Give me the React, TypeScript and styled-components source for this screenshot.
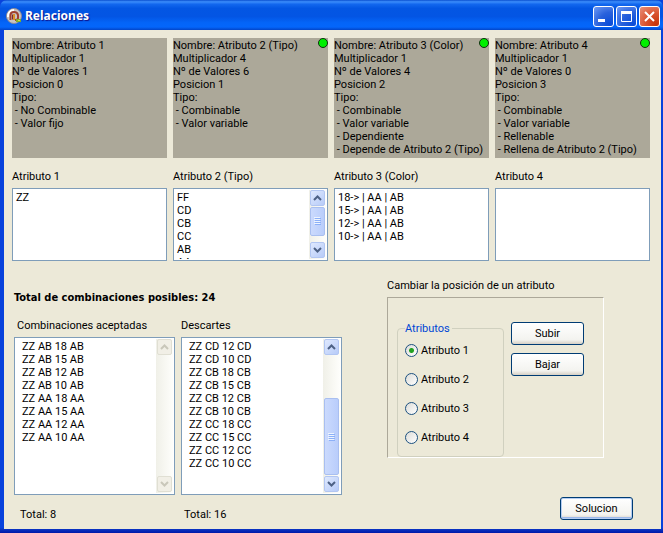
import React, { useState } from "react";
import styled, { createGlobalStyle, css } from "styled-components";

const GlobalStyle = createGlobalStyle`
  *, *::before, *::after { box-sizing: border-box; }
  body { margin: 0; background: #ece9d8; }
  body, button, input {
    font-family: Roboto, "DejaVu Sans Condensed", sans-serif;
    font-size: 11px;
    line-height: 13px;
    color: #000;
  }
`;

const Window = styled.main`
  display: flex;
  flex-direction: column;
  min-height: 100vh;
  background: linear-gradient(to top, #0018a8 0, #0a35c4 4px, #0842dc 5px);
`;

const TitleBar = styled.header`
  display: flex;
  align-items: center;
  gap: 3px;
  height: 30px;
  padding: 2px 3px 0 6px;
  border-radius: 7px 7px 0 0;
  background: linear-gradient(
    to bottom,
    #0a4fd0 0%,
    #3b8dfb 6%,
    #1267ee 14%,
    #0356e3 28%,
    #0355e4 55%,
    #0465f8 76%,
    #0466fb 90%,
    #0345c8 100%
  );
`;

const Title = styled.h1`
  flex: 1;
  margin: 0;
  font: bold 12px/18px "Noto Sans", "Open Sans", sans-serif;
  color: #fff;
  text-shadow: 1px 1px 1px #0f1089;
`;

const Captions = styled.div`
  display: flex;
  gap: 2px;
`;

const CaptionButton = styled.button<{ $close?: boolean }>`
  width: 21px;
  height: 21px;
  padding: 0;
  border: 1px solid #fff;
  border-radius: 3px;
  background: ${(p) =>
    p.$close
      ? "radial-gradient(circle at 85% 90%, #c5340a, #d9532f 45%, #e9907a)"
      : "radial-gradient(circle at 85% 90%, #0a4cd8, #2a62dc 50%, #6f9bf5)"};

  svg { display: block; }
`;

const Client = styled.div`
  flex: 1;
  display: flex;
  flex-direction: column;
  margin: 0 2px 4px 4px;
  padding: 8px 11px 8px 8px;
  background: #ece9d8;
`;

const AttributeGrid = styled.section`
  display: grid;
  grid-template-columns: repeat(4, minmax(0, 1fr));
  column-gap: 6px;
  row-gap: 12px;
`;

const InfoPanel = styled.article`
  position: relative;
  height: 120px;
  padding-top: 1px;
  background: #aca899;
  white-space: pre;
`;

const StatusDot = styled.span`
  position: absolute;
  top: 0;
  right: 0;
  width: 10px;
  height: 10px;
  border: 1px solid #103010;
  border-radius: 50%;
  background: #00f000;
`;

const Labelled = styled.div<{ $gap: number }>`
  display: flex;
  flex-direction: column;
  gap: ${(p) => p.$gap}px;
  min-width: 0;
`;

const Label = styled.span<{ $indent?: number }>`
  padding-left: ${(p) => p.$indent ?? 0}px;
  white-space: nowrap;
`;

const ListFrame = styled.div<{ $height: number }>`
  display: flex;
  height: ${(p) => p.$height}px;
  padding: 1px;
  border: 1px solid #7f9db9;
  background: #fff;
`;

const Items = styled.ul<{ $indent: number }>`
  flex: 1;
  min-width: 0;
  margin: 0;
  padding: 1px 0 0 ${(p) => p.$indent}px;
  overflow: hidden;
  list-style: none;
  white-space: nowrap;
`;

const Track = styled.div`
  display: flex;
  flex-direction: column;
  width: 17px;
  background: linear-gradient(to right, #f0f0e8, #fefefb);
`;

const arrowColors = css<{ $disabled?: boolean }>`
  border: 1px solid ${(p) => (p.$disabled ? "#e0dfd3" : "#b2c6f2")};
  background: ${(p) =>
    p.$disabled ? "#f1efe6" : "linear-gradient(135deg, #dfe9fe, #b7cbf8)"};
  color: ${(p) => (p.$disabled ? "#c9c7ba" : "#4d6185")};
`;

const ArrowButton = styled.button<{ $disabled?: boolean }>`
  flex: none;
  display: flex;
  align-items: center;
  justify-content: center;
  width: 15px;
  height: 16px;
  margin: 0 1px 1px;
  padding: 0;
  border-radius: 2px;
  ${arrowColors}
`;

const TrackSpace = styled.div<{ $grow: number }>`
  flex: ${(p) => p.$grow} 1 0;
`;

const Thumb = styled.div<{ $grow: number }>`
  flex: ${(p) => p.$grow} 1 0;
  display: flex;
  align-items: center;
  justify-content: center;
  margin: 0 1px 1px;
  border: 1px solid #a9bff0;
  border-radius: 2px;
  background: linear-gradient(to right, #cbdafd, #b9cdfb);
`;

const Lower = styled.section`
  display: grid;
  grid-template-columns: minmax(0, 330fr) minmax(0, 263fr);
  column-gap: 45px;
  flex: 1;
`;

const Results = styled.div`
  padding: 30px 0 0 2px;
`;

const Summary = styled.h2`
  margin: 0 0 14px;
  font: bold 11px/14px "DejaVu Sans Condensed", "DejaVu Sans", sans-serif;
`;

const ResultLists = styled.div`
  display: grid;
  grid-template-columns: repeat(2, minmax(0, 1fr));
  column-gap: 6px;
`;

const TotalLine = styled.p<{ $indent: number }>`
  margin: 8px 0 0;
  padding-left: ${(p) => p.$indent}px;
`;

const Side = styled.div`
  display: flex;
  flex-direction: column;
  padding-top: 18px;
`;

const PositionFrame = styled.div`
  display: flex;
  align-items: flex-start;
  gap: 7px;
  width: 217px;
  margin-top: 5px;
  padding: 24px 0 0 9px;
  border: 1px solid;
  border-color: #aca899 #fff #fff #aca899;
`;

const RadioGroup = styled.fieldset`
  display: flex;
  flex-direction: column;
  gap: 16px;
  width: 107px;
  min-width: 0;
  margin: 0;
  padding: 9px 7px 12px;
  border: 1px solid #d0d0bf;
  border-radius: 4px;
`;

const Legend = styled.legend`
  padding: 0 2px 0 0;
  color: #0046d5;
`;

const RadioLabel = styled.label`
  display: flex;
  align-items: center;
  gap: 3px;
`;

const Radio = styled.input`
  appearance: none;
  width: 13px;
  height: 13px;
  margin: 0;
  border: 1px solid #1c5180;
  border-radius: 50%;
  background: linear-gradient(135deg, #dcdcd7, #fff);

  &:checked {
    background:
      radial-gradient(circle, #21a121 0 2px, transparent 3px),
      linear-gradient(135deg, #dcdcd7, #fff);
  }
`;

const ButtonColumn = styled.div`
  display: flex;
  flex-direction: column;
  gap: 8px;
`;

const PushButton = styled.button<{ $default?: boolean }>`
  width: 73px;
  height: 23px;
  padding: 0;
  border: 1px solid #003c74;
  border-radius: 3px;
  background: linear-gradient(to bottom, #fff, #f3f3ef 80%, #d6d0c5);
  ${(p) => p.$default && "box-shadow: inset 0 0 0 1px #b5cdf2, inset 0 -2px 0 #9db9eb;"}
`;

const Footer = styled.div`
  display: flex;
  justify-content: flex-end;
  margin: 39px 17px 0 0;
`;

function Arrow({ down }: { down?: boolean }) {
  return (
    <svg width="9" height="6" viewBox="0 0 9 6" fill="none" stroke="currentColor" strokeWidth="2">
      <path d={down ? "M1 1l3.5 3.5L8 1" : "M1 5l3.5-3.5L8 5"} />
    </svg>
  );
}

type Scroll = { before: number; thumb: number; after: number } | "disabled";

function ScrollBar({ scroll }: { scroll: Scroll }) {
  const disabled = scroll === "disabled";
  return (
    <Track>
      <ArrowButton type="button" aria-label="Subir lista" disabled={disabled} $disabled={disabled}>
        <Arrow />
      </ArrowButton>
      {scroll === "disabled" ? (
        <TrackSpace $grow={1} />
      ) : (
        <>
          <TrackSpace $grow={scroll.before} />
          <Thumb $grow={scroll.thumb}>
            <svg width="7" height="8" viewBox="0 0 7 8">
              <path d="M0 .5h6M0 2.5h6M0 4.5h6M0 6.5h6" stroke="#eef4fe" />
              <path d="M1 1.5h6M1 3.5h6M1 5.5h6M1 7.5h6" stroke="#8cb0f8" />
            </svg>
          </Thumb>
          <TrackSpace $grow={scroll.after} />
        </>
      )}
      <ArrowButton type="button" aria-label="Bajar lista" disabled={disabled} $disabled={disabled}>
        <Arrow down />
      </ArrowButton>
    </Track>
  );
}

function ListBox(props: { label: string; items: string[]; height: number; indent: number; scroll?: Scroll }) {
  return (
    <ListFrame $height={props.height}>
      <Items aria-label={props.label} $indent={props.indent}>
        {props.items.map((item) => (
          <li key={item}>{item}</li>
        ))}
      </Items>
      {props.scroll && <ScrollBar scroll={props.scroll} />}
    </ListFrame>
  );
}

type Attribute = {
  name: string;
  multiplier: number;
  count: number;
  kinds: string[];
  values: string[];
  scroll?: Scroll;
  active: boolean;
};

const attributes: Attribute[] = [
  {
    name: "Atributo 1",
    multiplier: 1,
    count: 1,
    kinds: ["No Combinable", "Valor fijo"],
    values: ["ZZ"],
    active: false,
  },
  {
    name: "Atributo 2 (Tipo)",
    multiplier: 4,
    count: 6,
    kinds: ["Combinable", "Valor variable"],
    values: ["FF", "CD", "CB", "CC", "AB", "AA"],
    scroll: { before: 0, thumb: 29, after: 6 },
    active: true,
  },
  {
    name: "Atributo 3 (Color)",
    multiplier: 1,
    count: 4,
    kinds: ["Combinable", "Valor variable", "Dependiente", "Depende de Atributo 2 (Tipo)"],
    values: ["18-> | AA | AB", "15-> | AA | AB", "12-> | AA | AB", "10-> | AA | AB"],
    active: true,
  },
  {
    name: "Atributo 4",
    multiplier: 1,
    count: 0,
    kinds: ["Combinable", "Valor variable", "Rellenable", "Rellena de Atributo 2 (Tipo)"],
    values: [],
    active: true,
  },
];

const accepted = ["AB 18 AB", "AB 15 AB", "AB 12 AB", "AB 10 AB", "AA 18 AA", "AA 15 AA", "AA 12 AA", "AA 10 AA"];
const discarded = [
  "CD 12 CD", "CD 10 CD", "CB 18 CB", "CB 15 CB", "CB 12 CB",
  "CB 10 CB", "CC 18 CC", "CC 15 CC", "CC 12 CC", "CC 10 CC",
];
const withPrefix = (codes: string[]) => codes.map((code) => `ZZ ${code}`);

export default function App() {
  const [selected, setSelected] = useState(0);

  return (
    <Window>
      <GlobalStyle />
      <TitleBar>
        <svg width="16" height="16" viewBox="0 0 16 16" aria-hidden="true">
          <circle cx="8" cy="8" r="7.5" fill="#c9c4c2" stroke="#8b8b98" />
          <path d="M2 9a6 6 0 0 1 6-7" fill="none" stroke="#fff" strokeWidth="2" />
          <path d="M4.500 12V7q0-3 3.500-3t4 3v3q0 2-3 2" fill="none" stroke="#a0402f" strokeWidth="2" />
          <path d="M8 6v6" stroke="#d99028" strokeWidth="2" />
          <path d="M6.500 6.500v5" stroke="#7a2a38" />
          <path d="M10 12.500h5" stroke="#7fae2c" strokeWidth="3" />
          <path d="M12 12.500h2" stroke="#d8d848" />
        </svg>
        <Title>Relaciones</Title>
        <Captions>
          <CaptionButton type="button" aria-label="Minimizar">
            <svg width="19" height="19"><path d="M4 13.5h7" stroke="#fff" strokeWidth="3" /></svg>
          </CaptionButton>
          <CaptionButton type="button" aria-label="Maximizar">
            <svg width="19" height="19" fill="none" stroke="#fff">
              <path d="M4.500 5v9.500h10V5" />
              <path d="M4 5.500h11" strokeWidth="3" />
            </svg>
          </CaptionButton>
          <CaptionButton type="button" aria-label="Cerrar" $close>
            <svg width="19" height="19"><path d="M5 5l9 9M14 5l-9 9" stroke="#fff" strokeWidth="2" /></svg>
          </CaptionButton>
        </Captions>
      </TitleBar>

      <Client>
        <AttributeGrid>
          {attributes.map((a, index) => (
            <InfoPanel key={a.name}>
              <div>Nombre: {a.name}</div>
              <div>Multiplicador {a.multiplier}</div>
              <div>Nº de Valores {a.count}</div>
              <div>Posicion {index}</div>
              <div>Tipo:</div>
              {a.kinds.map((kind) => (
                <div key={kind}>{` - ${kind}`}</div>
              ))}
              {a.active && <StatusDot />}
            </InfoPanel>
          ))}
          {attributes.map((a) => (
            <Labelled key={a.name} $gap={5}>
              <Label>{a.name}</Label>
              <ListBox label={a.name} items={a.values} height={73} indent={2} scroll={a.scroll} />
            </Labelled>
          ))}
        </AttributeGrid>

        <Lower>
          <Results>
            <Summary>Total de combinaciones posibles: 24</Summary>
            <ResultLists>
              <Labelled $gap={5}>
                <Label $indent={3}>Combinaciones aceptadas</Label>
                <ListBox
                  label="Combinaciones aceptadas"
                  items={withPrefix(accepted)}
                  height={158}
                  indent={6}
                  scroll="disabled"
                />
                <TotalLine $indent={6}>Total: 8</TotalLine>
              </Labelled>
              <Labelled $gap={5}>
                <Label>Descartes</Label>
                <ListBox
                  label="Descartes"
                  items={withPrefix(discarded)}
                  height={158}
                  indent={6}
                  scroll={{ before: 43, thumb: 76, after: 0 }}
                />
                <TotalLine $indent={3}>Total: 16</TotalLine>
              </Labelled>
            </ResultLists>
          </Results>

          <Side>
            <Label>Cambiar la posición de un atributo</Label>
            <PositionFrame>
              <RadioGroup>
                <Legend>Atributos</Legend>
                {attributes.map((a, index) => (
                  <RadioLabel key={a.name}>
                    <Radio
                      type="radio"
                      name="atributo"
                      checked={selected === index}
                      onChange={() => setSelected(index)}
                    />
                    Atributo {index + 1}
                  </RadioLabel>
                ))}
              </RadioGroup>
              <ButtonColumn>
                <PushButton type="button">Subir</PushButton>
                <PushButton type="button">Bajar</PushButton>
              </ButtonColumn>
            </PositionFrame>
            <Footer>
              <PushButton type="button" $default>Solucion</PushButton>
            </Footer>
          </Side>
        </Lower>
      </Client>
    </Window>
  );
}
